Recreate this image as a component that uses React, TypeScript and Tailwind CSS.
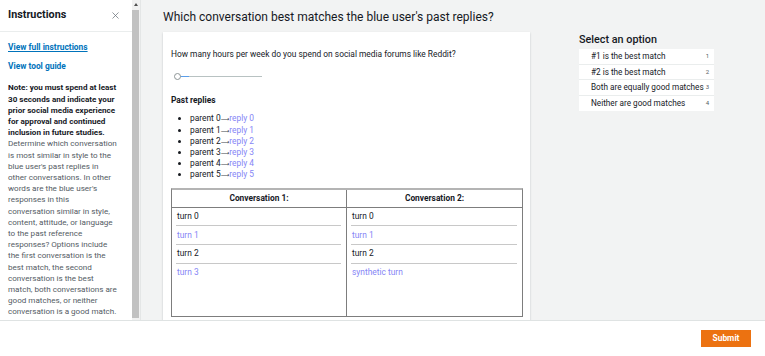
import { X } from 'lucide-react'

const pastReplies = [0, 1, 2, 3, 4, 5]

const options = [
  '#1 is the best match',
  '#2 is the best match',
  'Both are equally good matches',
  'Neither are good matches',
]

const conv1 = [
  { text: 'turn 0', blue: false },
  { text: 'turn 1', blue: true },
  { text: 'turn 2', blue: false },
  { text: 'turn 3', blue: true },
]

const conv2 = [
  { text: 'turn 0', blue: false },
  { text: 'turn 1', blue: true },
  { text: 'turn 2', blue: false },
  { text: 'synthetic turn', blue: true },
]

// wrapped the same way as the original panel
const noteLines = [
  'Note: you must spend at least',
  '30 seconds and indicate your',
  'prior social media experience',
  'for approval and continued',
  'inclusion in future studies.',
]

const descLines = [
  'Determine which conversation',
  'is most similar in style to the',
  "blue user's past replies in",
  'other conversations. In other',
  "words are the blue user's",
  'responses in this',
  'conversation similar in style,',
  'content, attitude, or language',
  'to the past reference',
  'responses? Options include',
  'the first conversation is the',
  'best match, the second',
  'conversation is the best',
  'match, both conversations are',
  'good matches, or neither',
  'conversation is a good match.',
]

function Turns({ turns }: { turns: { text: string; blue: boolean }[] }) {
  return (
    <div className="pl-[4px] pr-[5px]">
      {turns.map((t, i) => (
        <div
          key={i}
          className={
            'h-[18.7px] flex items-center pl-[1px] ' +
            (i < turns.length - 1 ? 'border-b border-[#c8c8c8] ' : '') +
            (t.blue ? 'text-[#8585f6]' : 'text-[#16191f]')
          }
        >
          {t.text}
        </div>
      ))}
    </div>
  )
}

export default function App() {
  return (
    <div className="w-[765px] h-[356px] flex flex-col overflow-hidden bg-white font-['Roboto',sans-serif] text-[#16191f]">
      <div className="flex h-[321px] border-b border-[#dfe3e3]">
        {/* instructions panel */}
        <aside className="w-[132px] bg-white flex flex-col">
          <div className="h-[32px] flex items-center justify-between pl-[8px] pr-[11px] border-b border-[#eaeded]">
            <span className="text-[10.8px] font-bold">Instructions</span>
            <X className="w-[11px] h-[11px] text-[#687078]" strokeWidth={1.6} />
          </div>
          <div className="pl-[8px] pt-[10px] text-[8.1px] leading-[11.2px] whitespace-nowrap">
            <div className="font-bold text-[8.4px] text-[#0073bb] underline">View full instructions</div>
            <div className="font-bold text-[8.4px] text-[#0073bb] mt-[8px]">View tool guide</div>
            <div className="mt-[10px]">
              {noteLines.map((l) => (
                <div key={l} className="font-bold">{l}</div>
              ))}
              {descLines.map((l) => (
                <div key={l} className="text-[#545b64]">{l}</div>
              ))}
            </div>
          </div>
        </aside>

        {/* fake scrollbar */}
        <div className="w-[9px] bg-[#f1f1f1] border-r border-[#e4e6e6] flex flex-col items-start">
          <div className="h-[10px] w-[7px] flex items-start justify-center pt-[3px]">
            <div className="w-0 h-0 border-l-[2px] border-r-[2px] border-b-[3px] border-l-transparent border-r-transparent border-b-[#505050]" />
          </div>
          <div className="w-[7px] h-[308px] bg-[#c1c1c1]" />
        </div>

        {/* main */}
        <main className="flex-1 bg-[#f2f3f3] pl-[22px] pt-[8px] overflow-hidden">
          <h1 className="text-[12px] leading-[18px] font-normal text-[#16191f]">
            Which conversation best matches the blue user's past replies?
          </h1>
          <div className="flex mt-[6px]">
            <div className="w-[367px] h-[300px] bg-white shadow-[0_1px_2px_rgba(0,28,36,0.2)] pl-[8px] pr-[6px] pt-[17px] text-[8.4px] leading-[11.2px]">
              <div>How many hours per week do you spend on social media forums like Reddit?</div>
              <div className="relative ml-[6px] mt-[16px] w-[85px] h-[1px] bg-[#b8c2c2]">
                <div className="absolute left-[2px] top-0 w-[10px] h-[1px] bg-[#5b9ee9]" />
                <div className="absolute left-[-3px] top-[-3px] w-[7px] h-[7px] rounded-full border border-[#8d9596] bg-white" />
              </div>
              <div className="font-bold mt-[18px]">Past replies</div>
              <ul className="list-disc pl-[19px] mt-[7px]">
                {pastReplies.map((n) => (
                  <li key={n} className="text-[#16191f]">
                    parent {n}
                    <span className="text-[6px] text-[#414750] font-['DejaVu_Sans',sans-serif]">⟶</span>
                    <span className="text-[#8585f6]">reply {n}</span>
                  </li>
                ))}
              </ul>
              <div className="mt-[7px] w-[352px] border border-[#7d7d7d] border-t-[#b4b4b4] border-t-2 grid grid-cols-2">
                <div className="border-r border-[#7d7d7d]">
                  <div className="h-[18px] flex items-center justify-center font-bold border-b border-[#7d7d7d]">
                    Conversation 1:
                  </div>
                  <div className="h-[108px]">
                    <Turns turns={conv1} />
                  </div>
                </div>
                <div>
                  <div className="h-[18px] flex items-center justify-center font-bold border-b border-[#7d7d7d]">
                    Conversation 2:
                  </div>
                  <div className="h-[108px]">
                    <Turns turns={conv2} />
                  </div>
                </div>
              </div>
            </div>

            <div className="ml-[49px] w-[135px] mt-[1px]">
              <div className="text-[10.8px] leading-[14px] font-medium">Select an option</div>
              <div className="mt-[2px] bg-white divide-y divide-[#eaeded] text-[8.2px]">
                {options.map((o, i) => (
                  <div key={o} className="h-[15.6px] flex items-center justify-between pl-[12px] pr-[5px] whitespace-nowrap">
                    <span>{o}</span>
                    <span className="text-[6px] text-[#545b64] self-start mt-[2px]">{i + 1}</span>
                  </div>
                ))}
              </div>
            </div>
          </div>
        </main>
      </div>

      {/* footer */}
      <footer className="flex-1 flex items-center justify-end pr-[14px]">
        <button className="w-[50px] h-[17px] bg-[#ec7211] text-white text-[8.4px] font-bold">Submit</button>
      </footer>
    </div>
  )
}
